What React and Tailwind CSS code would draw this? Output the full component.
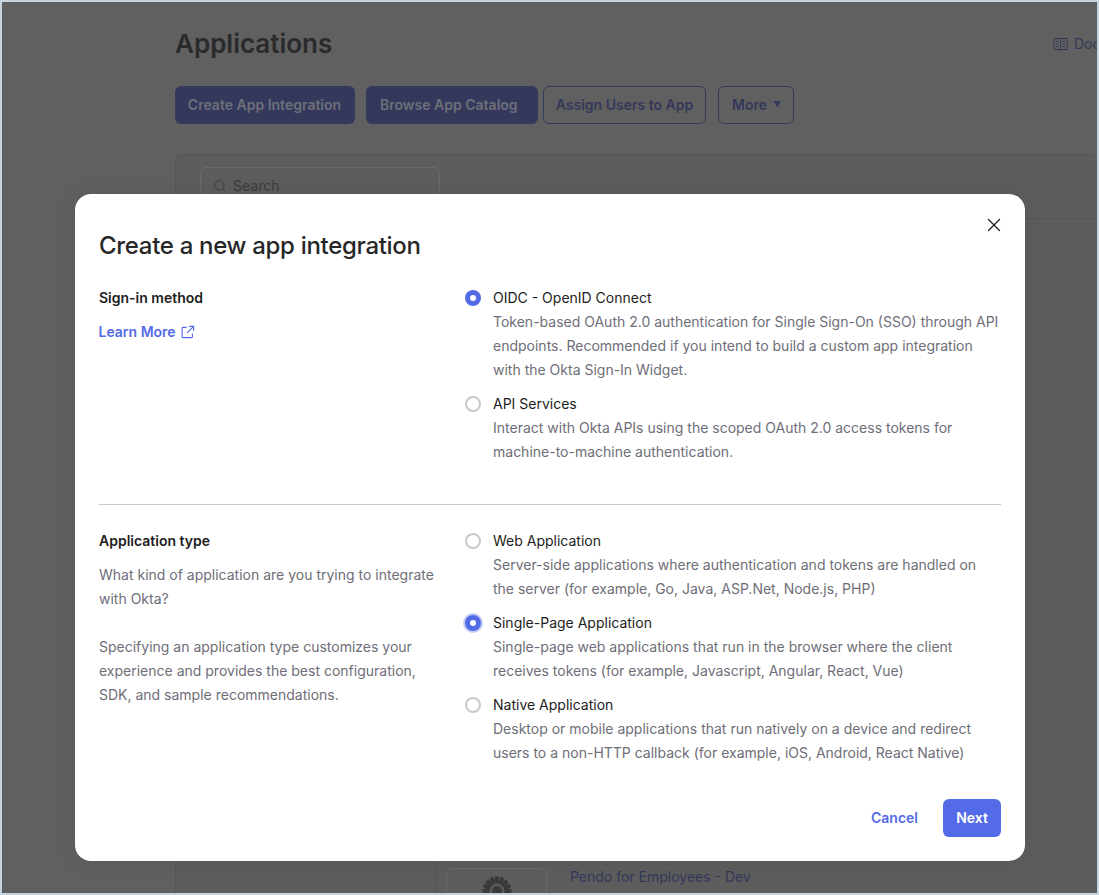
import React from "react";
import { X, Search } from "lucide-react";

function Radio({ checked, focused }) {
  if (checked) {
    return (
      <span className={`mt-1 flex h-4 w-4 shrink-0 items-center justify-center rounded-full bg-[#546be7] ${focused ? "shadow-[0_0_0_2px_#c3ccf6]" : ""}`}>
        <span className="h-1.5 w-1.5 rounded-full bg-white" />
      </span>
    );
  }
  return <span className="mt-1 h-4 w-4 shrink-0 rounded-full border-2 border-[#c9c9cc] bg-white" />;
}

function Option({ checked, focused, title, lines }) {
  return (
    <div className="flex gap-3">
      <Radio checked={checked} focused={focused} />
      <div className="text-sm leading-6">
        <div className="text-[#1d1d21]">{title}</div>
        {lines.map((l) => (
          <div key={l} className="whitespace-nowrap text-[#6e6e78]">{l}</div>
        ))}
      </div>
    </div>
  );
}

function BookIcon() {
  return (
    <svg width="15" height="15" viewBox="0 0 15 15" fill="none" stroke="currentColor" strokeWidth="1" className="shrink-0">
      <path d="M7.5 1.5 H1 V12.5 H7.5 M7.5 1.5 H14 V12.5 H7.5 V14 M7.5 1.5 V12.5" />
      <path d="M3 4.5 H5.5 M3 7 H5.5 M3 9.5 H5.5 M9.5 4.5 H12 M9.5 7 H12 M9.5 9.5 H12" />
    </svg>
  );
}

function GearIcon() {
  const teeth = [0, 45, 90, 135, 180, 225, 270, 315, 22.5, 67.5, 112.5, 157.5, 202.5, 247.5, 292.5, 337.5];
  return (
    <svg width="30" height="30" viewBox="0 0 30 30" className="shrink-0">
      {teeth.map((a) => (
        <rect key={a} x="13" y="0.5" width="4" height="6" fill="#3a3a3b" transform={`rotate(${a} 15 15)`} />
      ))}
      <circle cx="15" cy="15" r="11.5" fill="#3a3a3b" />
      <circle cx="15" cy="15" r="7.5" fill="#5b5b5b" />
      <circle cx="15" cy="15" r="5" fill="#3a3a3b" />
    </svg>
  );
}

function Background() {
  return (
    <div className="h-full pl-[173px] pt-[20px]">
      <div className="flex h-11 items-center justify-between">
        <h1 className="text-[26px] font-semibold leading-[44px] text-[#2a2a2c]">Applications</h1>
        <div className="flex w-[44px] shrink-0 items-center gap-[6px] overflow-hidden whitespace-nowrap text-sm text-[#34385a]">
          <BookIcon />
          Docs
        </div>
      </div>
      <div className="mt-[20px] flex h-[38px]">
        <div className="flex w-[180px] items-center justify-center rounded-md bg-[#34385a] pr-[1px] text-sm font-semibold text-[#6e6f7b]">Create App Integration</div>
        <div className="ml-[11px] flex w-[172px] items-center rounded-md bg-[#34385a] pl-[14px] text-sm font-semibold text-[#6e6f7b]">Browse App Catalog</div>
        <div className="ml-[5px] flex w-[163px] items-center justify-center rounded-md border border-[#34385a] text-sm font-semibold text-[#34385a]">Assign Users to App</div>
        <div className="ml-[12px] flex w-[76px] items-center gap-[6px] rounded-md border border-[#34385a] pl-[13px] text-sm font-semibold text-[#34385a]">
          More <span className="text-[8px]">▼</span>
        </div>
      </div>
      <div className="mt-[30px] rounded-t-md border border-r-0 border-[#585858] bg-[#5d5d5d]">
        <div className="h-[64px] border-b border-[#555555] px-6 pt-3">
          <div className="flex h-[50px] w-[240px] items-start gap-[6px] rounded-md border border-[#6a6a6a] px-3 pt-[8px] text-sm text-[#3c3c3f]">
            <Search size={14} strokeWidth={1.5} className="mt-[3px] shrink-0" />
            Search
          </div>
        </div>
        <div className="flex h-[700px]">
          <div className="w-[261px] border-r border-[#535353]" />
          <div className="flex pl-[9px] pt-[649px]">
            <div className="flex h-[50px] w-[101px] justify-center rounded-t-md border border-[#6a6a6a] pt-[7px]">
              <GearIcon />
            </div>
            <div className="-mt-[1px] ml-[23px] text-sm leading-5 text-[#34385a]">Pendo for Employees - Dev</div>
          </div>
        </div>
      </div>
    </div>
  );
}

export default function App() {
  return (
    <div className="relative h-[895px] w-[1099px] overflow-hidden border-2 border-[#c6d3dc] bg-[#606060] [font-family:Inter,'Noto_Sans',sans-serif]">
      <Background />
      <div className="absolute left-[73px] top-[192px] h-[667px] w-[950px] rounded-[16px] bg-white px-6 pt-6 shadow-[0_0_24px_rgba(0,0,0,0.08)]">
        <button className="absolute right-[19px] top-[19px] flex h-6 w-6 items-center justify-center text-[#1d1d21]">
          <X size={22} strokeWidth={1.4} />
        </button>
        <h2 className="h-[68px] text-2xl font-medium leading-[56px] tracking-[-0.31px] text-[#272727]">Create a new app integration</h2>
        <div className="grid grid-cols-[366px_1fr] pb-10">
          <div className="text-sm leading-6">
            <div className="font-semibold text-[#1d1d21]">Sign-in method</div>
            <a className="-ml-[0.5px] mt-[10px] flex items-center gap-[5px] font-semibold text-[#546be7]">
              Learn More <svg width="14" height="14" viewBox="0 0 15 15" fill="none" stroke="currentColor" strokeWidth="1.2" className="shrink-0"><path d="M6 2.5H2a.8.8 0 0 0-.8.8v9.4a.8.8 0 0 0 .8.8h9.4a.8.8 0 0 0 .8-.8V9M8.5 1.5H13.5V6.5M13.5 1.5 6.5 8.5" /></svg>
            </a>
          </div>
          <div className="flex flex-col gap-[10px]">
            <Option checked title="OIDC - OpenID Connect" lines={["Token-based OAuth 2.0 authentication for Single Sign-On (SSO) through API", "endpoints. Recommended if you intend to build a custom app integration", "with the Okta Sign-In Widget."]} />
            <Option title="API Services" lines={["Interact with Okta APIs using the scoped OAuth 2.0 access tokens for", "machine-to-machine authentication."]} />
          </div>
        </div>
        <div className="border-t border-[#c9c9cc]" />
        <div className="mt-6 grid grid-cols-[366px_1fr]">
          <div className="text-sm leading-6">
            <div className="font-semibold text-[#1d1d21]">Application type</div>
            <p className="mt-[10px] w-[340px] text-[#6e6e78]">What kind of application are you trying to integrate with Okta?</p>
            <p className="mt-6 w-[340px] text-[#6e6e78]">Specifying an application type customizes your experience and provides the best configuration, SDK, and sample recommendations.</p>
          </div>
          <div className="flex flex-col gap-[10px]">
            <Option title="Web Application" lines={["Server-side applications where authentication and tokens are handled on", "the server (for example, Go, Java, ASP.Net, Node.js, PHP)"]} />
            <Option checked focused title="Single-Page Application" lines={["Single-page web applications that run in the browser where the client", "receives tokens (for example, Javascript, Angular, React, Vue)"]} />
            <Option title="Native Application" lines={["Desktop or mobile applications that run natively on a device and redirect", "users to a non-HTTP callback (for example, iOS, Android, React Native)"]} />
          </div>
        </div>
        <div className="mt-[34px] flex items-center justify-end">
          <button className="text-sm font-semibold text-[#546be7]">Cancel</button>
          <button className="ml-[25px] h-[38px] w-[58px] rounded-md bg-[#546be7] text-sm font-semibold text-white">Next</button>
        </div>
      </div>
    </div>
  );
}
